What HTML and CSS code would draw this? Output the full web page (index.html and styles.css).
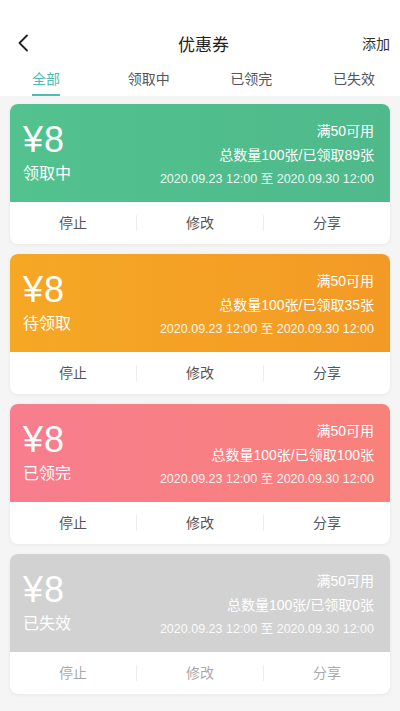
FILE: index.html
```html
<!DOCTYPE html>
<html lang="zh">
  <head>
    <meta charset="UTF-8" />
    <meta name="viewport" content="width=device-width, initial-scale=1.0" />
    <title>优惠券</title>
    <link rel="stylesheet" href="styles.css">
  </head>
  <body>
    <div class="header">
      <div class="nav">
        <span class="back">
          <svg width="12" height="18" viewBox="0 0 12 18">
            <path d="M10 1.5 L2.5 9 L10 16.5" fill="none" stroke="#222" stroke-width="1.8" stroke-linecap="round" stroke-linejoin="round" />
          </svg>
        </span>
        <span class="title">优惠券</span>
        <span class="add">添加</span>
      </div>
      <div class="tabs">
        <span class="tab active">全部</span>
        <span class="tab">领取中</span>
        <span class="tab">已领完</span>
        <span class="tab">已失效</span>
      </div>
    </div>

    <div class="list" id="list"></div>

    <script>
      // Coupon data
      const coupons = [
        { status: "领取中", type: "green", got: 89 },
        { status: "待领取", type: "orange", got: 35 },
        { status: "已领完", type: "pink", got: 100 },
        { status: "已失效", type: "gray", got: 0 },
      ];

      function renderCoupons() {
        const list = document.getElementById("list");
        list.innerHTML = "";
        coupons.forEach((c) => {
          const card = document.createElement("div");
          card.className = "coupon " + c.type;
          card.innerHTML = `
            <div class="face">
              <div class="left">
                <div class="amount">¥8</div>
                <div class="status">${c.status}</div>
              </div>
              <div class="right">
                <p>满50可用</p>
                <p>总数量100张/已领取${c.got}张</p>
                <p class="date">2020.09.23 12:00 至 2020.09.30 12:00</p>
              </div>
            </div>
            <div class="actions">
              <span>停止</span>
              <span>修改</span>
              <span>分享</span>
            </div>
          `;
          list.appendChild(card);
        });
      }

      renderCoupons();
    </script>
  </body>
</html>
```

FILE: styles.css
```css
body {
  font-family: "Liberation Sans", "Noto Sans CJK SC", sans-serif;
  margin: 0;
  padding: 0;
  background-color: #f5f5f5;
  color: #222;
}
.header {
  background: #fff;
  padding-top: 22px;
}
.nav {
  height: 42px;
  display: flex;
  align-items: center;
  justify-content: space-between;
  padding: 0 10px 0 17px;
}
.back {
  display: flex;
  width: 40px;
}
.title {
  font-size: 17px;
  color: #222;
}
.add {
  font-size: 14px;
  color: #333;
  width: 40px;
  text-align: right;
}
.tabs {
  height: 32px;
  display: flex;
  justify-content: space-between;
  padding: 0 16px;
}
.tab {
  width: 60px;
  text-align: center;
  font-size: 14px;
  color: #555;
  line-height: 31px;
  position: relative;
}
.tab.active {
  color: #4cbcb4;
}
.tab.active::after {
  content: "";
  position: absolute;
  left: 16px;
  right: 16px;
  bottom: 0;
  height: 2px;
  background: #4cbcb4;
}
.list {
  padding: 8px 10px;
  display: flex;
  flex-direction: column;
  gap: 10px;
}
.coupon {
  border-radius: 8px;
  overflow: hidden;
  background: #fff;
  box-shadow: 0 1px 4px rgba(0, 0, 0, 0.06);
}
.face {
  height: 98px;
  display: flex;
  justify-content: space-between;
  color: #fff;
  padding: 0 16px 0 13px;
}
.coupon.green .face {
  background: linear-gradient(90deg, #52c28f, #4fb98b);
}
.coupon.orange .face {
  background: linear-gradient(90deg, #f5a824, #f39a26);
}
.coupon.pink .face {
  background: linear-gradient(90deg, #f87d8e, #f8817a);
}
.coupon.gray .face {
  background: #d2d2d2;
}
.left {
  padding-top: 16px;
}
.amount {
  font-size: 36px;
  line-height: 40px;
  letter-spacing: 1px;
}
.status {
  font-size: 16px;
  line-height: 22px;
  margin-top: 3px;
}
.right {
  padding-top: 15px;
  text-align: right;
}
.right p {
  margin: 0;
  font-size: 14px;
  line-height: 24px;
}
.right .date {
  font-size: 12.5px;
  line-height: 25px;
  opacity: 0.9;
}
.actions {
  height: 42px;
  display: flex;
  align-items: center;
}
.actions span {
  flex: 1;
  text-align: center;
  font-size: 14px;
  color: #555;
  border-left: 1px solid #eee;
  line-height: 14px;
  padding: 1px 0;
}
.actions span:first-child {
  border-left: none;
}
.coupon.gray .actions span {
  color: #aaa;
}
```
